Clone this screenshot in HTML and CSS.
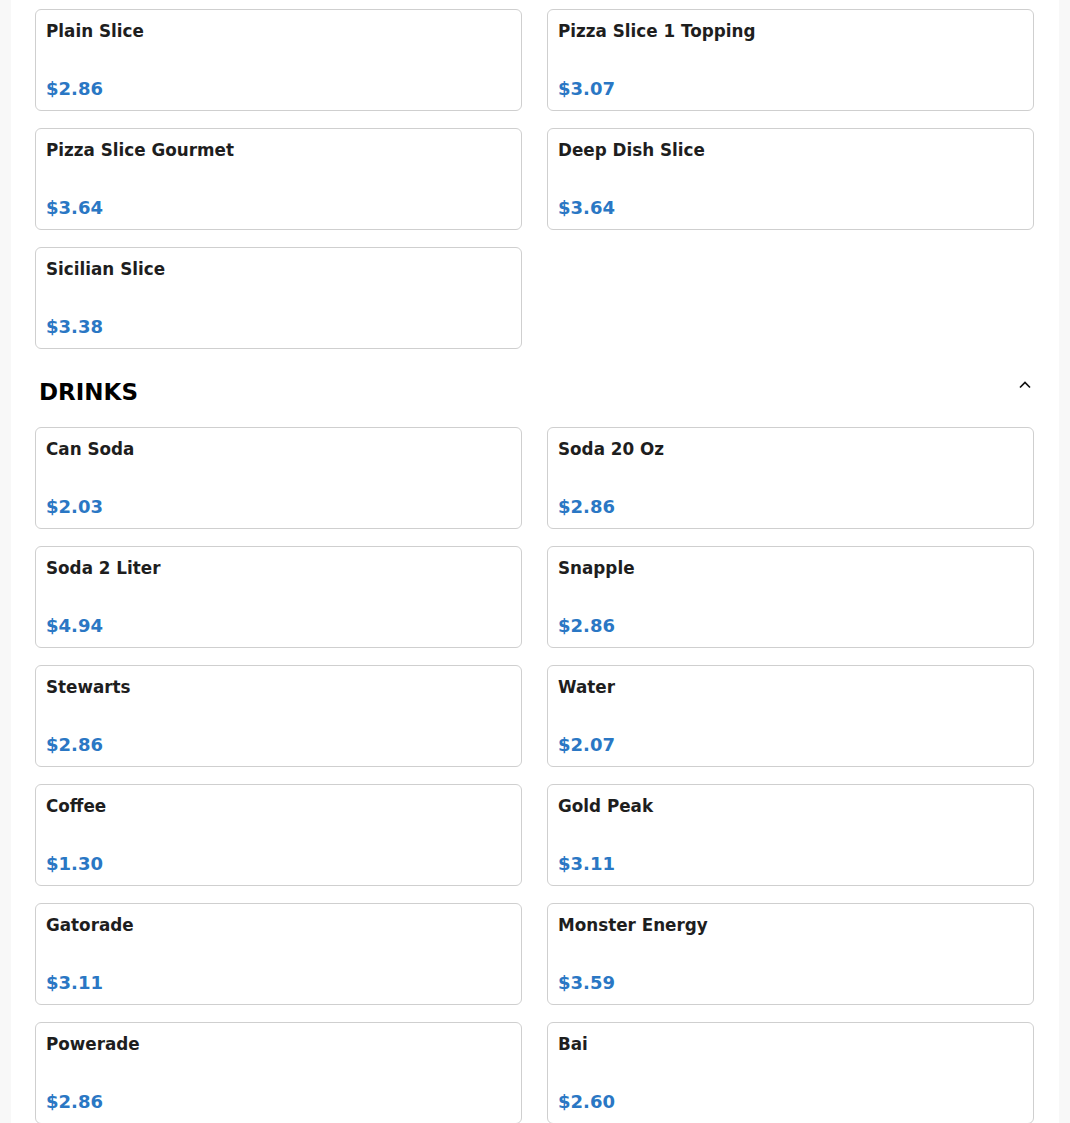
FILE: index.html
```html
<!DOCTYPE html>
<html>
<head>
<meta charset="utf-8">
<link rel="stylesheet" href="styles.css">
</head>
<body>
<div class="page">
  <div class="grid">
    <div class="card"><div class="name">Plain Slice</div><div class="price">$2.86</div></div>
    <div class="card"><div class="name">Pizza Slice 1 Topping</div><div class="price">$3.07</div></div>
    <div class="card"><div class="name">Pizza Slice Gourmet</div><div class="price">$3.64</div></div>
    <div class="card"><div class="name">Deep Dish Slice</div><div class="price">$3.64</div></div>
    <div class="card"><div class="name">Sicilian Slice</div><div class="price">$3.38</div></div>
  </div>
  <div class="section-head">
    <h2 class="section-title">DRINKS</h2>
    <svg class="chev" width="14" height="14" viewBox="0 0 14 14"><path d="M2 9.5 L7 4.5 L12 9.5" fill="none" stroke="#111" stroke-width="1.7"/></svg>
  </div>
  <div class="grid">
    <div class="card"><div class="name">Can Soda</div><div class="price">$2.03</div></div>
    <div class="card"><div class="name">Soda 20 Oz</div><div class="price">$2.86</div></div>
    <div class="card"><div class="name">Soda 2 Liter</div><div class="price">$4.94</div></div>
    <div class="card"><div class="name">Snapple</div><div class="price">$2.86</div></div>
    <div class="card"><div class="name">Stewarts</div><div class="price">$2.86</div></div>
    <div class="card"><div class="name">Water</div><div class="price">$2.07</div></div>
    <div class="card"><div class="name">Coffee</div><div class="price">$1.30</div></div>
    <div class="card"><div class="name">Gold Peak</div><div class="price">$3.11</div></div>
    <div class="card"><div class="name">Gatorade</div><div class="price">$3.11</div></div>
    <div class="card"><div class="name">Monster Energy</div><div class="price">$3.59</div></div>
    <div class="card"><div class="name">Powerade</div><div class="price">$2.86</div></div>
    <div class="card"><div class="name">Bai</div><div class="price">$2.60</div></div>
  </div>
</div>
</body>
</html>
```
FILE: styles.css
```css
html, body {
  margin: 0;
  padding: 0;
  background: #f8f8f8;
  font-family: "DejaVu Sans", sans-serif;
  overflow: hidden;
}
.page {
  width: 1048px;
  margin: 0 0 0 11px;
  background: #fff;
  padding: 9px 25px 40px 24px;
  box-sizing: border-box;
  min-height: 1200px;
}
.grid {
  display: grid;
  grid-template-columns: 1fr 1fr;
  column-gap: 25px;
  row-gap: 17px;
}
.card {
  border: 1px solid #cfcfcf;
  border-radius: 6px;
  padding: 11px 10px 10px 10px;
  height: 102px;
  box-sizing: border-box;
  display: flex;
  flex-direction: column;
  justify-content: space-between;
}
.name {
  font-weight: bold;
  font-size: 16.8px;
  color: #1e1e1e;
  line-height: 20px;
}
.price {
  font-weight: bold;
  font-size: 18px;
  color: #2a77c4;
  line-height: 22px;
}
.section-head {
  display: flex;
  align-items: center;
  justify-content: space-between;
  padding: 28px 0 20px 4px;
}
.section-title {
  margin: 0;
  font-size: 23px;
  font-weight: bold;
  color: #000;
  line-height: 30px;
}
.chev {
  margin-right: 2px;
  margin-top: -14px;
}
```
